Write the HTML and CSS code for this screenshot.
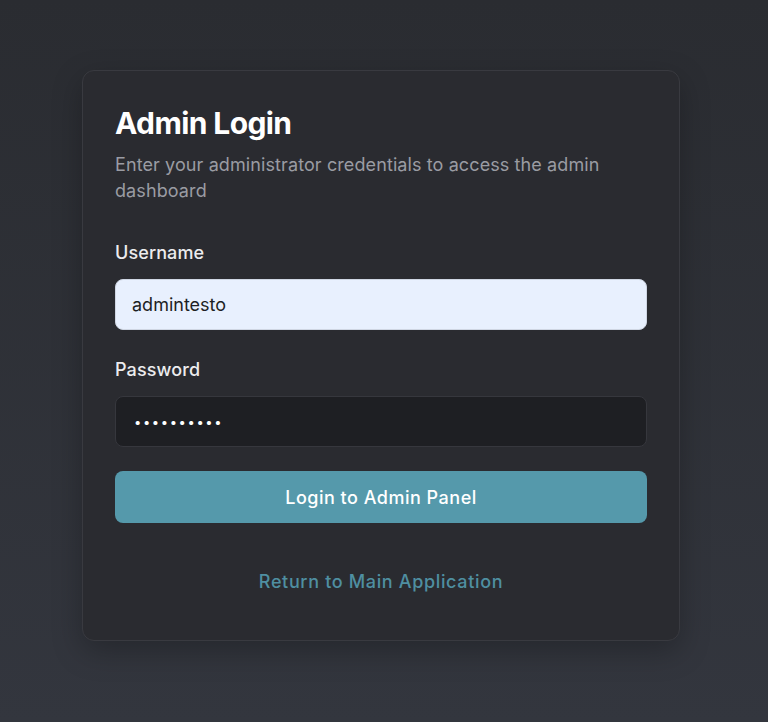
FILE: index.html
```html
<!DOCTYPE html>
<html lang="en">
<head>
<meta charset="utf-8">
<title>Admin Login</title>
<link rel="stylesheet" href="styles.css">
</head>
<body>
<main class="page">
  <section class="card">
    <h1 class="title">Admin Login</h1>
    <p class="subtitle">Enter your administrator credentials to access the admin dashboard</p>
    <form class="form">
      <div class="field">
        <label class="label" for="username">Username</label>
        <input class="input input-autofill" id="username" type="text" value="admintesto">
      </div>
      <div class="field">
        <label class="label" for="password">Password</label>
        <input class="input input-dark" id="password" type="password" value="adminpass1">
      </div>
      <button class="btn" type="button">Login to Admin Panel</button>
    </form>
    <div class="footer">
      <a class="link" href="#">Return to Main Application</a>
    </div>
  </section>
</main>
</body>
</html>
```

FILE: styles.css
```css
* { box-sizing: border-box; }
html, body { margin: 0; padding: 0; }
body {
  font-family: Inter, "Noto Sans", sans-serif;
  background: linear-gradient(180deg, #2a2c31 0%, #33363e 100%);
  min-height: 722px;
  color: #f4f4f5;
}
.page {
  display: flex;
  justify-content: flex-start;
  padding: 70px 0 0 82px;
}
.card {
  width: 598px;
  height: 571px;
  background: #2a2b30;
  border: 1px solid #393a40;
  border-radius: 12px;
  padding: 32px;
  box-shadow: 0 10px 30px rgba(0,0,0,0.25);
}
.title {
  margin: 0;
  font-size: 30px;
  font-weight: 700;
  letter-spacing: -0.6px;
  line-height: 40px;
  color: #ffffff;
}
.subtitle {
  margin: 9px 0 0;
  font-size: 18px;
  letter-spacing: 0.1px;
  line-height: 26px;
  color: #9a9ca3;
}
.form {
  display: flex;
  flex-direction: column;
  margin-top: 37px;
}
.field {
  display: flex;
  flex-direction: column;
  margin-bottom: 24px;
}
.field + .btn { margin-top: 0; }
.label {
  font-size: 18px;
  font-weight: 500;
  letter-spacing: 0.1px;
  line-height: 24px;
  color: #ececee;
  margin-bottom: 14px;
}
.field + .field { margin-top: 4px; }
.input {
  height: 51px;
  border-radius: 8px;
  padding: 0 16px;
  font-family: inherit;
  font-size: 18px;
  outline: none;
}
.input-autofill {
  background: #e8f0fe;
  border: 1px solid #cfd6e3;
  color: #1d1f24;
}
.input-dark {
  background: #1e1f23;
  border: 1px solid #36373d;
  color: #ffffff;
  font-size: 13px;
  letter-spacing: 1.6px;
  padding-left: 18px;
}
.btn {
  height: 52px;
  border: none;
  border-radius: 8px;
  background: #5599ab;
  color: #ffffff;
  font-family: inherit;
  font-size: 18px;
  font-weight: 500;
  letter-spacing: 0.5px;
}
.footer {
  display: flex;
  justify-content: center;
  margin-top: 47px;
}
.link {
  color: #4f8fa1;
  text-decoration: none;
  font-size: 18px;
  font-weight: 500;
  letter-spacing: 0.65px;
  line-height: 24px;
}
```
